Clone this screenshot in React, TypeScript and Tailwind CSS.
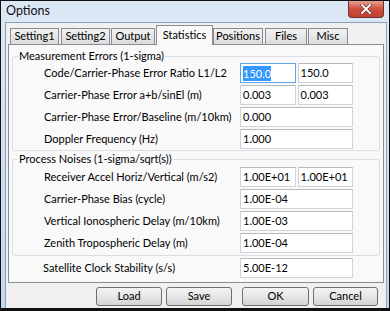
import React from 'react';

type Row = { label: string; values: string[]; focus?: boolean };

const MEAS: Row[] = [
  { label: 'Code/Carrier-Phase Error Ratio L1/L2', values: ['150.0', '150.0'], focus: true },
  { label: 'Carrier-Phase Error a+b/sinEl (m)', values: ['0.003', '0.003'] },
  { label: 'Carrier-Phase Error/Baseline (m/10km)', values: ['0.000'] },
  { label: 'Doppler Frequency (Hz)', values: ['1.000'] },
];

const NOISE: Row[] = [
  { label: 'Receiver Accel Horiz/Vertical (m/s2)', values: ['1.00E+01', '1.00E+01'] },
  { label: 'Carrier-Phase Bias (cycle)', values: ['1.00E-04'] },
  { label: 'Vertical Ionospheric Delay (m/10km)', values: ['1.00E-03'] },
  { label: 'Zenith Tropospheric Delay (m)', values: ['1.00E-04'] },
];

const TABS = [
  { name: 'Setting1', cls: 'w-[49px]' },
  { name: 'Setting2', cls: 'w-[49px] ml-[2px]' },
  { name: 'Output', cls: 'w-[44px] ml-[1px]' },
  { name: 'Statistics', cls: 'w-[57px] ml-[1px]', active: true },
  { name: 'Positions', cls: 'w-[50px]' },
  { name: 'Files', cls: 'w-[42px] ml-[2px]' },
  { name: 'Misc', cls: 'w-[40px] ml-[1px]' },
];

function Field({ value, focus }: { value: string; focus?: boolean }) {
  return (
    <div
      className={
        'h-[20px] flex-1 flex items-center px-[2px] bg-white border ' +
        (focus ? 'border-[#5ea6ea]' : 'border-[#cfd3da] border-t-[#b5b9c0]')
      }
    >
      {focus ? <span className="bg-[#3399ff] text-white leading-[15px]">{value}</span> : <span>{value}</span>}
    </div>
  );
}

function FieldRow({ row }: { row: Row }) {
  return (
    <div className="flex items-center">
      <div className="flex-1 min-w-0 whitespace-nowrap">{row.label}</div>
      <div className="w-[113px] shrink-0 flex gap-[2px]">
        {row.values.map((v, i) => (
          <Field key={i} value={v} focus={row.focus && i === 0} />
        ))}
      </div>
    </div>
  );
}

function Group({ title, rows, className }: { title: string; rows: Row[]; className: string }) {
  return (
    <fieldset className={'border border-[#d5dfe5] rounded-[3px] mx-[3px] ' + className}>
      <legend className="ml-[5px] px-[1px] leading-[14px]">{title}</legend>
      <div className="flex flex-col gap-[2px] pl-[31px] pr-[26px]">
        {rows.map((r) => (
          <FieldRow key={r.label} row={r} />
        ))}
      </div>
    </fieldset>
  );
}

function Button({ label, cls }: { label: string; cls: string }) {
  return (
    <div
      className={
        'h-[19px] flex items-center justify-center rounded-[3px] border border-[#707070] bg-gradient-to-b from-[#f4f4f4] via-[#e6e6e6] to-[#d4d4d4] ' +
        cls
      }
    >
      {label}
    </div>
  );
}

export default function App() {
  return (
    <div
      className="w-[390px] h-[311px] bg-[#111] pt-[1px] px-[1px] pb-[3px] overflow-hidden text-[11px] text-black"
      style={{ fontFamily: 'Lato, "Noto Sans", sans-serif' }}
    >
      <div className="h-full flex flex-col bg-gradient-to-b from-[#dce8f5] to-[#c4d7ee]">
        {/* title bar */}
        <div className="h-[21px] flex items-start justify-between pl-[5px]">
          <div className="text-[12.5px] leading-[20px] text-[#111]">Options</div>
          <div className="w-[36px] h-[17px] mr-[5px] rounded-b-[4px] border border-t-0 border-[#6d3131] bg-gradient-to-b from-[#e5a293] via-[#cd4e3c] to-[#c1412f] flex items-center justify-center">
            <svg width="12" height="10" viewBox="0 0 12 10">
              <path d="M2 1 L10 9 M10 1 L2 9" stroke="#5a2a22" strokeWidth="3.2" strokeLinecap="square" />
              <path d="M2 1 L10 9 M10 1 L2 9" stroke="#ffffff" strokeWidth="2" strokeLinecap="square" />
            </svg>
          </div>
        </div>

        {/* client area */}
        <div className="flex-1 ml-[4px] mr-[2px] border border-b-0 border-[#8d9fb6] bg-[#f0f0f0] flex flex-col pt-[2px]">
          {/* tabs */}
          <div className="h-[19px] flex items-end ml-[4px]">
            {TABS.map((t) =>
              t.active ? (
                <div
                  key={t.name}
                  className={
                    'relative z-10 h-[20px] -mb-px flex items-start justify-center pt-[1px] border border-b-0 border-[#898c95] bg-[#f9f9f9] leading-[16px] ' +
                    t.cls
                  }
                >
                  {t.name}
                </div>
              ) : (
                <div
                  key={t.name}
                  className={
                    'h-[16px] flex items-center justify-center border border-b-0 border-[#898c95] bg-gradient-to-b from-[#f2f2f2] to-[#dcdcdc] ' +
                    t.cls
                  }
                >
                  {t.name}
                </div>
              ),
            )}
          </div>

          {/* tab page */}
          <div className="mx-[2px] border border-[#898c95] bg-[#f9f9f9] pt-[4px] pb-[4px] flex flex-col">
            <Group title="Measurement Errors (1-sigma)" rows={MEAS} className="pb-[1px]" />
            <Group title="Process Noises (1-sigma/sqrt(s))" rows={NOISE} className="mt-[1px] pb-[2px] [&>div]:pt-[1px]" />
            <div className="flex items-center mt-[2px] pl-[34px] pr-[30px]">
              <div className="flex-1">Satellite Clock Stability (s/s)</div>
              <div className="w-[113px] shrink-0 flex">
                <Field value="5.00E-12" />
              </div>
            </div>
          </div>

          {/* buttons */}
          <div className="flex justify-end mt-[4px] pr-[8px]">
            <Button label="Load" cls="w-[66px]" />
            <Button label="Save" cls="w-[66px] ml-[4px]" />
            <Button label="OK" cls="w-[67px] ml-[10px]" />
            <Button label="Cancel" cls="w-[65px] ml-[4px]" />
          </div>
        </div>
      </div>
    </div>
  );
}
